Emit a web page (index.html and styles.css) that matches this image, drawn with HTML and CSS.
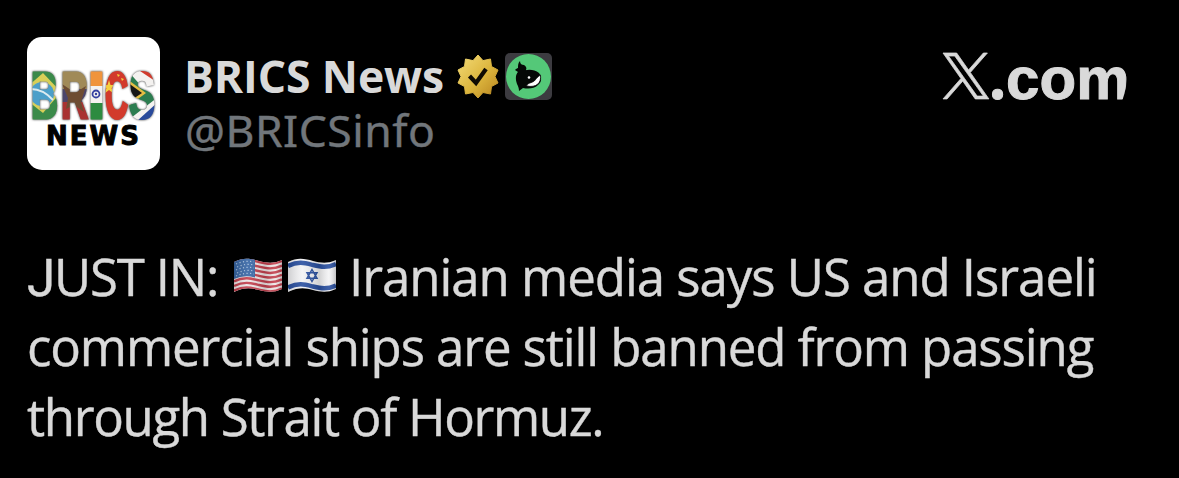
FILE: index.html
```
<!DOCTYPE html>
<html lang="en">
    <head>
        <title>BRICS News</title>
        <meta charset="utf-8"/>
        <meta name="viewport" content="width=device-width,initial-scale=1"/>
        <link rel="stylesheet" href="styles.css">
    </head>
    <body>
        <article class="post">
            <header class="header">
                <svg class="avatar" viewBox="0 0 133 133">
                    <defs>
                        <pattern id="brazil" patternUnits="userSpaceOnUse" x="4" y="32" width="30" height="52">
                            <rect width="30" height="52" fill="#3b8a4a"/>
                            <path d="M-12 25L12 4 30 23 12 44z" fill="#d8cf58"/>
                            <circle cx="11" cy="25" r="12" fill="#4c9fc9"/>
                            <path d="M0 20q12 0 22 11" stroke="#dcebf0" stroke-width="2" fill="none"/>
                        </pattern>
                        <pattern id="russia" patternUnits="userSpaceOnUse" x="33" y="32" width="30" height="52">
                            <rect width="30" height="52" fill="#a08a58"/>
                            <rect y="20" width="30" height="13" fill="#4c456a"/>
                            <rect y="33" width="30" height="19" fill="#a93232"/>
                            <path d="M2 15l9 6 4-7 3 8 8-5-5 16 3 10-10-7-8 4 2-11z" fill="#6d4c32"/>
                        </pattern>
                        <pattern id="india" patternUnits="userSpaceOnUse" x="61" y="32" width="18" height="52">
                            <rect width="18" height="17" fill="#f0943c"/>
                            <rect y="17" width="18" height="17" fill="#f4f2f0"/>
                            <rect y="34" width="18" height="18" fill="#2d8b40"/>
                            <circle cx="8" cy="25" r="3.500" fill="none" stroke="#3540a0" stroke-width="1.800"/>
                            <circle cx="8" cy="25" r="1.200" fill="#3540a0"/>
                        </pattern>
                        <pattern id="china" patternUnits="userSpaceOnUse" x="76" y="32" width="27" height="52">
                            <rect width="27" height="52" fill="#d23a2c"/>
                            <path d="M6 11l1.500 5h5l-4 3 1.500 5-4-3-4 3 1.500-5-4-3h5z" fill="#f5cf3d"/>
                            <path d="M14 5l3 1-2 2zM18 9l3 1-2 2z" fill="#f5cf3d"/>
                        </pattern>
                        <pattern id="africa" patternUnits="userSpaceOnUse" x="100" y="32" width="31" height="52">
                            <rect width="31" height="52" fill="#f4f2f0"/>
                            <path d="M10 0L31 14V0z" fill="#d23a2c"/>
                            <path d="M0 1l16 18h15v9L0 52z" fill="#2c7d50"/>
                            <path d="M0 10l19 14L0 38z" fill="#e5bd43"/>
                            <path d="M0 13l15 11L0 34z" fill="#171717"/>
                            <path d="M10 52l21-19v19z" fill="#294a9b"/>
                        </pattern>
                    </defs>
                    <rect width="133" height="133" rx="15" fill="#fff"/>
                    <g class="logo_top">
                        <text x="4" y="81" textLength="27" lengthAdjust="spacingAndGlyphs" fill="url(#brazil)" stroke="url(#brazil)">B</text>
                        <text x="34" y="81" textLength="27" lengthAdjust="spacingAndGlyphs" fill="url(#russia)" stroke="url(#russia)">R</text>
                        <text x="61" y="81" textLength="17" lengthAdjust="spacingAndGlyphs" fill="url(#india)" stroke="url(#india)">I</text>
                        <text x="78" y="81" textLength="23" lengthAdjust="spacingAndGlyphs" fill="url(#china)" stroke="url(#china)">C</text>
                        <text x="102" y="81" textLength="26" lengthAdjust="spacingAndGlyphs" fill="url(#africa)" stroke="url(#africa)">S</text>
                    </g>
                    <text class="logo_bottom" x="19" y="108" textLength="93">NEWS</text>
                </svg>
                <div class="names">
                    <div class="title">
                        <h1 class="name">BRICS News</h1>
                        <svg class="verified" viewBox="0 0 42 44">
                            <defs>
                                <linearGradient id="gold" x1="0" y1="0" x2="1" y2="1">
                                    <stop offset="0" stop-color="#f4dc78"/>
                                    <stop offset="0.55" stop-color="#dcb53d"/>
                                    <stop offset="1" stop-color="#b88420"/>
                                </linearGradient>
                            </defs>
                            <path d="M21 1l5 5.600 7.500-1.600 1 7.500 6.500 3.500-3 6.500 3 6.500-6.500 3.500-1 7.500-7.500-1.500-5 5.500-5-5.500-7.500 1.500-1-7.500L1 29l3-6.500L1 16l6.500-3.500 1-7.500L16 6.600z" fill="url(#gold)" stroke="url(#gold)" stroke-linejoin="round"/>
                            <path d="M12.500 22l6.500 7 10-14" fill="none" stroke="#100b03" stroke-width="4.200"/>
                        </svg>
                        <svg class="badge" viewBox="0 0 47 47">
                            <rect width="47" height="47" rx="5" fill="#3c3b40"/>
                            <circle cx="23.500" cy="23.500" r="22.500" fill="#54c878"/>
                            <path d="M15 8c0 3 2 4 4 4 2 1 3 3 2 5l-5 2c5-3 13-3 18 1 3 4 3 9-1 12-4 4-10 4-15 3l-4 3c0-3-1-5-2-7-2-6-1-10 1-12l-3-2c1-1 2-2 3-2 0-3 0-5 2-7z" fill="#050806"/>
                            <path d="M35.500 22c1 8-4 13-14 11 1-3 4-3 6-4 3-1 3-4 8-7z" fill="#fff" stroke="#050806" stroke-width=".8"/>
                            <circle cx="24" cy="24.500" r="1.300" fill="#fff"/>
                        </svg>
                    </div>
                    <div class="handle">@BRICSinfo</div>
                </div>
                <div class="site">
                    <svg class="x_logo" viewBox="0 0 24 24" preserveAspectRatio="none">
                        <path d="M14.258 10.152L23.176 0h-2.113l-7.747 8.813L7.133 0H0l9.352 13.328L0 23.973h2.113l8.176-9.309 6.531 9.309h7.133zm-2.895 3.293l-.949-1.328L2.875 1.560h3.246l6.086 8.523.945 1.328 7.910 11.078h-3.246z" fill="#d9d9d9" stroke="#d9d9d9" stroke-width=".4"/>
                    </svg>
                    <span class="dotcom"><span class="dot">.</span>com</span>
                </div>
            </header>
            <p class="text">
                <span class="line">
                    <span class="just_in"><span class="j">J</span>UST IN:</span>
                    <svg class="flag" viewBox="0 0 48 36">
                        <defs>
                            <clipPath id="wave"><path d="M0 4C10-1 17 1 25 3s14 3 23-1v29c-9 4-15 3-23 1s-14-3-25 2z"/></clipPath>
                            <linearGradient id="shade">
                                <stop offset="0" stop-color="#000" stop-opacity=".15"/>
                                <stop offset=".3" stop-color="#fff" stop-opacity=".1"/>
                                <stop offset=".65" stop-color="#000" stop-opacity=".14"/>
                                <stop offset=".85" stop-color="#fff" stop-opacity=".1"/>
                                <stop offset="1" stop-color="#000" stop-opacity=".2"/>
                            </linearGradient>
                        </defs>
                        <g clip-path="url(#wave)">
                            <rect width="48" height="36" fill="#efe6e6"/>
                            <g fill="none" stroke="#c43f4d" stroke-width="2.400">
                                <path d="M0 5C10 0 17 2 25 4s14 3 23-1"/>
                                <path d="M0 9.600c10-5 17-3 25-1s14 3 23-1"/>
                                <path d="M0 14.200c10-5 17-3 25-1s14 3 23-1"/>
                                <path d="M0 18.800c10-5 17-3 25-1s14 3 23-1"/>
                                <path d="M0 23.400c10-5 17-3 25-1s14 3 23-1"/>
                                <path d="M0 28c10-5 17-3 25-1s14 3 23-1"/>
                                <path d="M0 32.600c10-5 17-3 25-1s14 3 23-1"/>
                            </g>
                            <path d="M0 0h21v19.500q-11-3-21 1.500z" fill="#3766a5"/>
                            <g fill="none" stroke="#a9c2df" stroke-width="1.200" stroke-dasharray="1.200 2.400">
                                <path d="M2 6q9-4 18-2M3 9q9-4 17-2M2 12q9-4 18-2M3 15q9-4 17-2M2 18q9-4 18-2"/>
                            </g>
                            <rect width="48" height="36" fill="url(#shade)"/>
                        </g>
                    </svg>
                    <svg class="flag" viewBox="0 0 48 36">
                        <g clip-path="url(#wave)">
                            <rect width="48" height="36" fill="#f3f3f5"/>
                            <g fill="none" stroke="#294fa0" stroke-width="4.500">
                                <path d="M0 8C10 3 17 5 25 7s14 3 23-1"/>
                                <path d="M0 29.500c10-5 17-3 25-1s14 3 23-1"/>
                            </g>
                            <path d="M24 11.500l5 8.800h-10zM24 23.500l5-8.800h-10z" fill="none" stroke="#294fa0" stroke-width="1.500"/>
                            <rect width="48" height="36" fill="url(#shade)"/>
                        </g>
                    </svg>
                    <span class="rest">Iranian media says US and Israeli</span>
                </span>
                <span class="line line2">commercial ships are still banned from passing</span>
                <span class="line line3">through Strait of Hormuz.</span>
            </p>
        </article>
    </body>
</html>
```
FILE: styles.css
```
body{
    margin:0;
    background-color:#000;
    color:#d9d9d9;
    font-family:"Open Sans", sans-serif;
}
.post{
    padding:37px 27px 0;
}
.header{
    display:flex;
    align-items:flex-start;
    height:133px;
}
.avatar{
    width:133px;
    height:133px;
    flex:none;
}
.logo_top{
    font-family:"Liberation Sans", sans-serif;
    font-weight:bold;
    font-size:65px;
    stroke-width:3;
    filter:drop-shadow(0 0 1px #333);
}
.logo_bottom{
    font-family:"DejaVu Sans", sans-serif;
    font-weight:bold;
    font-size:26px;
    stroke:#000;
    stroke-width:1;
}
.names{
    margin-left:25px;
    padding-top:13px;
}
.title{
    display:flex;
    align-items:center;
    height:52px;
}
.name{
    margin:0 0 0 -1px;
    width:261px;
    font-size:44.500px;
    line-height:52px;
    font-weight:700;
    letter-spacing:-0.1px;
    white-space:nowrap;
}
.verified{
    width:42px;
    height:44px;
    margin-left:12px;
}
.badge{
    width:47px;
    height:47px;
    margin-left:6px;
}
.handle{
    font-family:"Noto Sans", sans-serif;
    color:#71767b;
    font-size:44.500px;
    line-height:55px;
    letter-spacing:0.5px;
    -webkit-text-stroke:0.4px #71767b;
}
.site{
    display:flex;
    margin-left:auto;
    margin-right:24px;
    padding-top:16px;
}
.x_logo{
    width:46px;
    height:46px;
    overflow:visible;
}
.dotcom{
    width:139px;
    height:54px;
    overflow:hidden;
    border-bottom-right-radius:12px 46px;
    font-family:"Liberation Sans", sans-serif;
    font-weight:bold;
    font-size:60px;
    line-height:51px;
    white-space:nowrap;
    -webkit-text-stroke:1px #d9d9d9;
}
.dot{
    font-family:"Open Sans", sans-serif;
    line-height:0;
}
.text{
    margin:71px 0 0;
    font-size:51px;
    letter-spacing:-1.05px;
    -webkit-text-stroke:0.4px #d9d9d9;
}
.line{
    display:flex;
    align-items:center;
    height:70px;
    white-space:nowrap;
}
.line2{
    letter-spacing:-1.12px;
}
.line3{
    letter-spacing:-1.35px;
}
.just_in{
    width:207px;
    letter-spacing:-1.2px;
}
.j{
    font-family:Roboto, sans-serif;
}
.flag{
    width:48px;
    height:36px;
    margin-right:6px;
}
.rest{
    margin-left:7px;
}
```
